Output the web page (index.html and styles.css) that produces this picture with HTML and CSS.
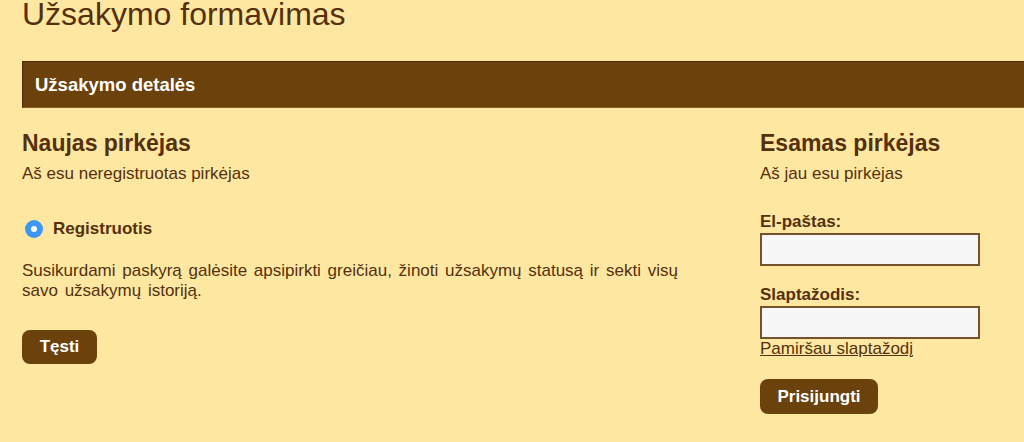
FILE: index.html
```html
<!DOCTYPE html>
<html lang="lt">
<head>
<meta charset="utf-8">
<title>Užsakymo formavimas</title>
<link rel="stylesheet" href="styles.css">
</head>
<body>
<div class="page">
  <h1 class="title">Užsakymo formavimas</h1>
  <div class="bar">Užsakymo detalės</div>
  <div class="cols">
    <section class="col-new">
      <h2 class="heading">Naujas pirkėjas</h2>
      <p class="sub">Aš esu neregistruotas pirkėjas</p>
      <label class="radio-row">
        <span class="radio"><span class="radio-dot"></span></span>
        <span class="radio-label">Registruotis</span>
      </label>
      <p class="desc">Susikurdami paskyrą galėsite apsipirkti greičiau, žinoti užsakymų statusą ir sekti visų savo užsakymų istoriją.</p>
      <button class="btn btn-next" type="button">Tęsti</button>
    </section>
    <section class="col-existing">
      <h2 class="heading">Esamas pirkėjas</h2>
      <p class="sub">Aš jau esu pirkėjas</p>
      <label class="field-label" for="email">El-paštas:</label>
      <input class="field" id="email" type="text">
      <label class="field-label field-label-2" for="pass">Slaptažodis:</label>
      <input class="field" id="pass" type="password">
      <a class="forgot" href="#">Pamiršau slaptažodį</a>
      <button class="btn btn-login" type="button">Prisijungti</button>
    </section>
  </div>
</div>
</body>
</html>
```

FILE: styles.css
```css
html, body {
  margin: 0;
  padding: 0;
  background: #fee8a1;
  height: 100%;
  overflow: hidden;
}
body {
  font-family: "Liberation Sans", Arial, sans-serif;
  color: #55300d;
}
.page {
  padding-left: 22px;
}
.title {
  margin: -4px 0 0 0;
  font-size: 32px;
  font-weight: normal;
  line-height: 36px;
  color: #55300d;
}
.bar {
  margin-top: 29px;
  height: 47px;
  box-sizing: border-box;
  background: #6b410c;
  border-top: 1px solid #4d2d06;
  border-left: 1px solid #4d2d06;
  border-bottom: 1px solid #8a6028;
  color: #fff;
  font-weight: bold;
  font-size: 18.5px;
  line-height: 45px;
  padding-left: 12px;
}
.cols {
  display: grid;
  grid-template-columns: 738px 1fr;
}
.heading {
  margin: 20px 0 0 0;
  font-size: 23px;
  line-height: 30px;
  font-weight: bold;
}
.sub {
  margin: 6px 0 0 0;
  font-size: 17px;
  line-height: 20px;
}
.radio-row {
  display: flex;
  align-items: center;
  margin-top: 35px;
  gap: 10px;
}
.radio {
  width: 18px;
  height: 18px;
  margin-left: 3px;
  border-radius: 50%;
  background: #3e96f5;
  display: flex;
  align-items: center;
  justify-content: center;
}
.radio-dot {
  width: 6px;
  height: 6px;
  border-radius: 50%;
  background: #fff;
}
.radio-label {
  font-weight: bold;
  font-size: 17px;
  line-height: 20px;
}
.desc {
  margin: 22px 0 0 0;
  font-size: 17px;
  line-height: 20px;
  word-spacing: 2px;
  max-width: 690px;
}
.btn {
  display: block;
  border: none;
  background: #6b410c;
  color: #fff;
  font-family: "Liberation Sans", Arial, sans-serif;
  font-weight: bold;
  font-size: 17px;
  border-radius: 8px;
  height: 34px;
  padding: 0;
  text-align: center;
}
.btn-next {
  margin-top: 29px;
  width: 75px;
}
.field-label {
  display: block;
  margin-top: 28px;
  margin-bottom: 1px;
  font-weight: bold;
  font-size: 17px;
  line-height: 20px;
}
.field-label-2 {
  margin-top: 19px;
}
.field {
  display: block;
  box-sizing: border-box;
  width: 220px;
  height: 33px;
  margin: 0;
  border: 2px solid #75522c;
  background: #f7f7f7;
}
.forgot {
  display: block;
  color: #55300d;
  font-size: 17px;
  line-height: 20px;
  text-decoration: underline;
}
.btn-login {
  margin-top: 20px;
  width: 118px;
  height: 35px;
}
```
